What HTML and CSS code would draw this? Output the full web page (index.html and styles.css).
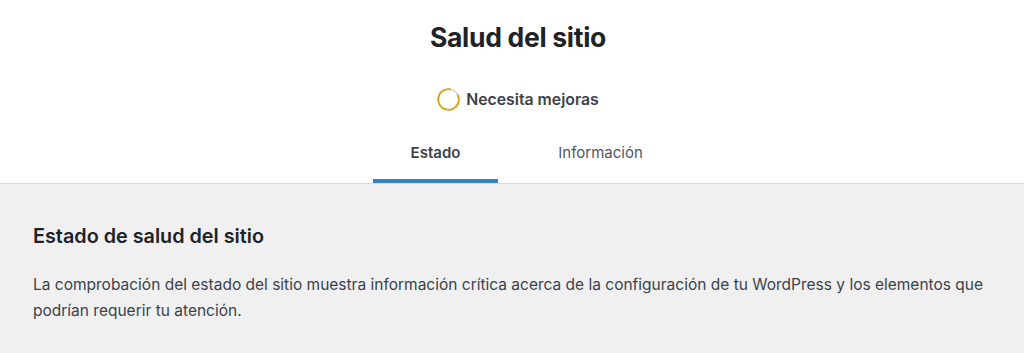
FILE: index.html
```html
<!DOCTYPE html>
<html lang="es">
<head>
<meta charset="utf-8">
<title>Salud del sitio</title>
<link rel="stylesheet" href="styles.css">
</head>
<body>
<header class="health-header">
  <h1 class="health-title">Salud del sitio</h1>
  <div class="health-status">
    <svg class="status-ring" width="23" height="23" viewBox="0 0 23 23" aria-hidden="true">
      <circle cx="11.5" cy="11.5" r="10.3" fill="none" stroke="#dcdcde" stroke-width="1.8"/>
      <circle cx="11.5" cy="11.5" r="10.3" fill="none" stroke="#dba617" stroke-width="1.8" stroke-dasharray="56 65" transform="rotate(-30 11.5 11.5)"/>
    </svg>
    <span class="status-label">Necesita mejoras</span>
  </div>
  <nav class="health-tabs">
    <a class="health-tab active" href="#">Estado</a>
    <a class="health-tab" href="#">Información</a>
  </nav>
</header>
<main class="health-body">
  <h2 class="section-title">Estado de salud del sitio</h2>
  <p class="section-text">La comprobación del estado del sitio muestra información crítica acerca de la configuración de tu WordPress y los elementos que podrían requerir tu atención.</p>
</main>
</body>
</html>
```
FILE: styles.css
```css
* { box-sizing: border-box; }
html, body { margin: 0; padding: 0; }
body {
  font-family: Inter, "Noto Sans", "Liberation Sans", sans-serif;
  background: #f0f0f1;
  color: #1d2327;
  height: 353px;
  overflow: hidden;
}
.health-header {
  background: #fff;
  border-bottom: 1px solid #dcdcde;
  display: flex;
  flex-direction: column;
  align-items: center;
  padding-left: 12px;
}
.health-title {
  margin: 18px 0 0;
  font-size: 26.5px;
  line-height: 38px;
  font-weight: 700;
  color: #1d2327;
  letter-spacing: -0.3px;
}
.health-status {
  display: flex;
  align-items: center;
  gap: 6px;
  margin-top: 32px;
}
.status-ring { display: block; }
.status-label {
  font-size: 15.8px;
  font-weight: 600;
  color: #3c434a;
}
.health-tabs {
  display: grid;
  grid-template-columns: 1fr 1fr;
  margin-top: 22px;
}
.health-tab {
  display: block;
  width: 125px;
  margin: 0 20px;
  padding: 11px 0 21px;
  text-align: center;
  text-decoration: none;
  color: #50575e;
  font-size: 15px;
  line-height: 18px;
}
.health-tab.active {
  font-weight: 600;
  color: #3c434a;
  box-shadow: inset 0 -4px #3582c4;
}
.health-body {
  padding: 39px 33px 0;
}
.section-title {
  margin: 0;
  font-size: 19.8px;
  line-height: 26px;
  font-weight: 600;
  color: #1d2327;
}
.section-text {
  margin: 23px 0 0;
  font-size: 15.5px;
  line-height: 26px;
  color: #3c434a;
  max-width: 960px;
}
```
